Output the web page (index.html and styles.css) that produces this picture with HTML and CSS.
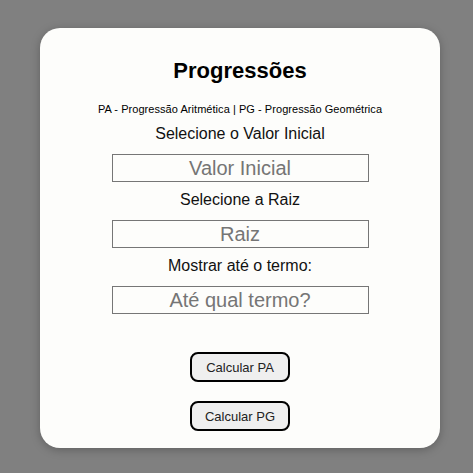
FILE: index.html
```html
<!DOCTYPE html>
<html lang="pt">
<head>
<meta charset="utf-8">
<title>Progressões</title>
<link rel="stylesheet" href="styles.css">
</head>
<body>
<main class="card">
  <h1 class="title">Progressões</h1>
  <p class="subtitle">PA - Progressão Aritmética | PG - Progressão Geométrica</p>
  <label class="label" for="ini">Selecione o Valor Inicial</label>
  <input class="field" id="ini" type="text" placeholder="Valor Inicial">
  <label class="label" for="raiz">Selecione a Raiz</label>
  <input class="field" id="raiz" type="text" placeholder="Raiz">
  <label class="label" for="termo">Mostrar até o termo:</label>
  <input class="field" id="termo" type="text" placeholder="Até qual termo?">
  <button class="btn btn-first" type="button">Calcular PA</button>
  <button class="btn" type="button">Calcular PG</button>
</main>
</body>
</html>
```
FILE: styles.css
```css
html, body {
  margin: 0;
  padding: 0;
}
body {
  background: #808080;
  font-family: "Liberation Sans", Arial, sans-serif;
  width: 473px;
  height: 473px;
  overflow: hidden;
}
.card {
  box-sizing: border-box;
  width: 400px;
  height: 420px;
  margin: 28px 0 0 40px;
  background: #fdfdfb;
  border-radius: 20px;
  box-shadow: 0 2px 10px rgba(0, 0, 0, 0.25);
  display: flex;
  flex-direction: column;
  align-items: center;
  padding-top: 30px;
  color: #000;
}
.title {
  margin: 0;
  font-size: 22px;
  line-height: 25px;
  font-weight: bold;
}
.subtitle {
  margin: 20px 0 0;
  font-size: 11px;
  line-height: 13px;
  letter-spacing: 0.05px;
}
.label {
  margin-top: 9px;
  font-size: 16px;
  line-height: 18px;
  color: #111;
}
.field {
  box-sizing: border-box;
  margin-top: 11px;
  width: 257px;
  height: 28px;
  padding: 0 4px;
  border: 1px solid #767676;
  border-radius: 0;
  background: #fdfdfb;
  font-family: "Liberation Sans", Arial, sans-serif;
  font-size: 20px;
  text-align: center;
  outline: none;
}
.field::placeholder {
  color: #757575;
  opacity: 1;
}
.btn {
  box-sizing: border-box;
  width: 100px;
  height: 30px;
  margin-top: 19px;
  border: 2px solid #000;
  border-radius: 8px;
  background: #efefef;
  color: #222;
  font-family: "Liberation Sans", Arial, sans-serif;
  font-size: 13px;
  padding: 0;
  cursor: pointer;
}
.btn-first {
  margin-top: 38px;
}
```
